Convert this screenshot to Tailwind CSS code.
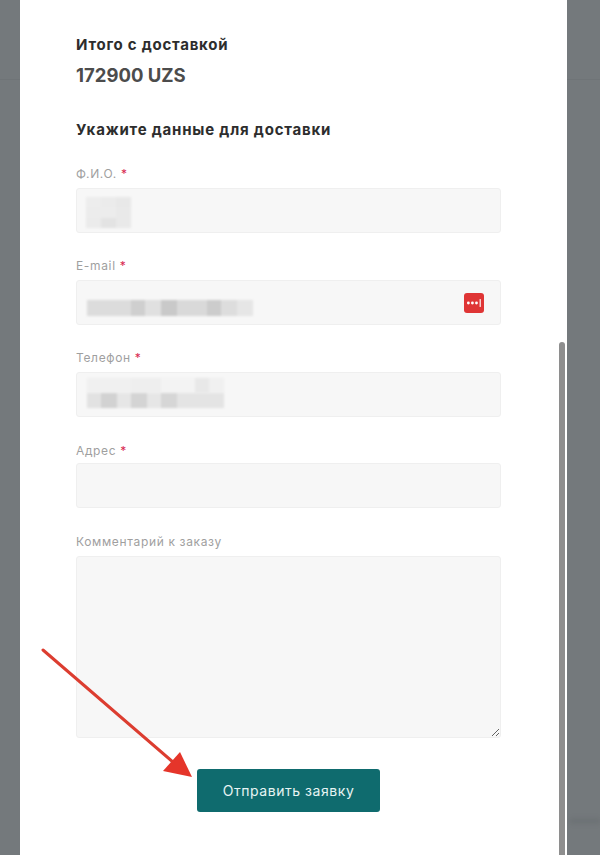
<!DOCTYPE html>
<html lang="ru">

<head>
    <meta charset="UTF-8">
    <meta name="viewport" content="width=device-width, initial-scale=1.0">
    <title>Оформление заявки</title>
    <script src="https://cdn.jsdelivr.net/npm/@tailwindcss/browser@4"></script>
</head>

<body class="relative h-[855px] w-[600px] overflow-hidden bg-[#74797c] font-['Inter','Noto_Sans',sans-serif]">
    <!-- page behind the overlay -->
    <div class="absolute left-0 top-[79px] h-px w-full bg-[#6f7477]"></div>
    <div class="absolute right-0 top-[818px] h-[6px] w-[30px] bg-[#6d7275] blur-[2px]"></div>

    <!-- modal -->
    <main class="relative ml-[20px] h-[855px] w-[547px] bg-white pl-[56px] pt-[36px]">
        <section class="w-[425px]">
            <h2 class="text-[15px] leading-[18px] font-bold tracking-[0.75px] text-[#2d2d2d]">Итого с доставкой</h2>
            <p class="mt-[10px] text-[18.5px] leading-[22px] font-bold text-[#4c4c4c]">172900 UZS</p>
            <h2 class="mt-[34px] text-[15px] leading-[20px] font-bold tracking-[0.8px] text-[#2d2d2d]">Укажите данные для доставки</h2>

            <form class="mt-[26px]">
                <label class="block text-[12px] leading-[16px] tracking-[0.65px] text-[#9f9f9f]">Ф.И.О. <span class="text-[#d8274f]">*</span></label>
                <div class="relative mt-[6px] h-[45px] rounded-[3px] border border-[#efefef] bg-[#f7f7f7]">
                    <div class="absolute left-[9px] top-[8px] grid grid-cols-3 grid-rows-3 h-[31px] w-[45px] blur-[1px]">
                        <div class="bg-[#ededed]"></div><div class="bg-[#ebebeb]"></div><div class="bg-[#e8e8e8]"></div>
                        <div class="bg-[#ececec]"></div><div class="bg-[#ececec]"></div><div class="bg-[#e9e9e9]"></div>
                        <div class="bg-[#ebebeb]"></div><div class="bg-[#e3e3e3]"></div><div class="bg-[#e9e9e9]"></div>
                    </div>
                </div>

                <label class="mt-[25px] block text-[12px] leading-[16px] tracking-[0.65px] text-[#9f9f9f]">E-mail <span class="text-[#d8274f]">*</span></label>
                <div class="relative mt-[6px] h-[45px] rounded-[3px] border border-[#efefef] bg-[#f7f7f7]">
                    <div class="absolute left-[10px] top-[19px] flex h-[16px] w-[166px] blur-[1px]">
                        <div class="w-[44px] bg-[#dcdcdc]"></div>
                        <div class="w-[14px] bg-[#cfcfcf]"></div>
                        <div class="w-[16px] bg-[#e0e0e0]"></div>
                        <div class="w-[16px] bg-[#c9c9c9]"></div>
                        <div class="w-[30px] bg-[#d9d9d9]"></div>
                        <div class="w-[14px] bg-[#cccccc]"></div>
                        <div class="w-[16px] bg-[#dddddd]"></div>
                        <div class="w-[16px] bg-[#e6e6e6]"></div>
                    </div>
                    <div class="absolute right-[16px] top-[12px] flex size-[20px] items-center justify-center rounded-[3px] bg-[#df3535]">
                        <svg class="size-[18px]" viewBox="0 0 16 16" fill="#fff">
                            <circle cx="3" cy="8" r="1.25"></circle>
                            <circle cx="6.6" cy="8" r="1.25"></circle>
                            <circle cx="10.2" cy="8" r="1.25"></circle>
                            <rect x="13" y="4.5" width="1" height="7"></rect>
                        </svg>
                    </div>
                </div>

                <label class="mt-[25px] block text-[12px] leading-[16px] tracking-[0.65px] text-[#9f9f9f]">Телефон <span class="text-[#d8274f]">*</span></label>
                <div class="relative mt-[6px] h-[45px] rounded-[3px] border border-[#efefef] bg-[#f7f7f7]">
                    <div class="absolute left-[10px] top-[5px] flex h-[15px] w-[137px] blur-[1px]">
                        <div class="w-[44px] bg-[#f0f0f0]"></div>
                        <div class="w-[30px] bg-[#eeeeee]"></div>
                        <div class="w-[34px] bg-[#f3f3f3]"></div>
                        <div class="w-[14px] bg-[#e8e8e8]"></div>
                        <div class="w-[15px] bg-[#f0f0f0]"></div>
                    </div>
                    <div class="absolute left-[10px] top-[20px] flex h-[15px] w-[137px] blur-[1px]">
                        <div class="w-[14px] bg-[#e2e2e2]"></div>
                        <div class="w-[16px] bg-[#d2d2d2]"></div>
                        <div class="w-[14px] bg-[#e6e6e6]"></div>
                        <div class="w-[16px] bg-[#d4d4d4]"></div>
                        <div class="w-[14px] bg-[#e6e6e6]"></div>
                        <div class="w-[16px] bg-[#d6d6d6]"></div>
                        <div class="w-[47px] bg-[#e4e4e4]"></div>
                    </div>
                </div>

                <label class="mt-[26px] block text-[12px] leading-[16px] tracking-[0.65px] text-[#9f9f9f]">Адрес <span class="text-[#d8274f]">*</span></label>
                <input type="text" class="mt-[4px] block h-[45px] w-full rounded-[3px] border border-[#efefef] bg-[#f7f7f7]">

                <label class="mt-[26px] block text-[12px] leading-[16px] tracking-[0.65px] text-[#9f9f9f]">Комментарий к заказу</label>
                <textarea class="mt-[6px] block h-[182px] w-full rounded-[3px] border border-[#efefef] bg-[#f7f7f7]"></textarea>

                <div class="mt-[31px] flex justify-center">
                    <button type="button" class="h-[43px] w-[183px] rounded-[3px] bg-[#0f6b6e] text-[14px] tracking-[0.55px] text-[#e6f4f3]">Отправить заявку</button>
                </div>
            </form>
        </section>

        <!-- scrollbar -->
        <div class="absolute right-[2px] top-[342px] h-[513px] w-[6px] rounded-t-[3px] bg-[#8e8e8e]"></div>
    </main>

    <!-- annotation arrow over the screenshot -->
    <svg class="absolute left-0 top-0" width="600" height="855" viewBox="0 0 600 855">
        <line x1="43" y1="650" x2="174" y2="763" stroke="#dc3d30" stroke-width="3" stroke-linecap="round"></line>
        <polygon points="180,752 192,777 163,771" fill="#e5352a"></polygon>
    </svg>
</body>

</html>
